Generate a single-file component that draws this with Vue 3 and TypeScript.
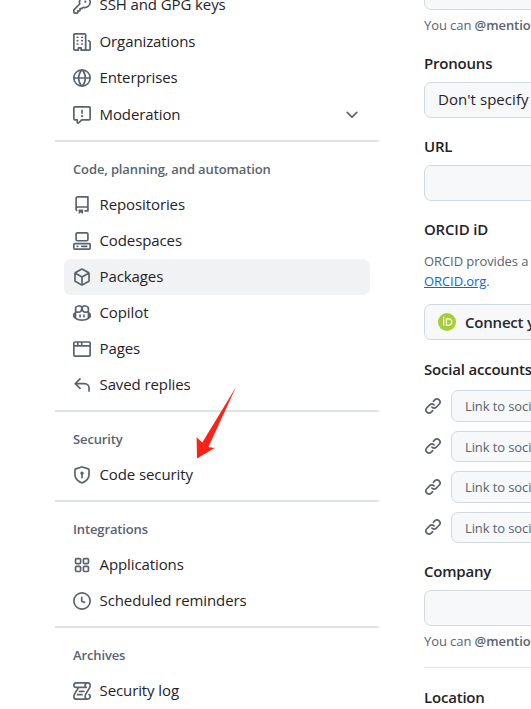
<script setup lang="ts">
interface NavItem {
  label: string
  icon: string
  active?: boolean
  expandable?: boolean
}
interface NavGroup {
  title?: string
  items: NavItem[]
}

const icons: Record<string, string> = {
  key: 'M10.5 0a5.499 5.499 0 1 1-1.288 10.848l-.932.932a.749.749 0 0 1-.53.22H7v.75a.749.749 0 0 1-.22.53l-.5.5a.749.749 0 0 1-.53.22H5v.75a.749.749 0 0 1-.22.53l-.5.5a.749.749 0 0 1-.53.22h-2A1.75 1.75 0 0 1 0 14.25v-2c0-.199.079-.389.22-.53l4.932-4.932A5.5 5.5 0 0 1 10.5 0Zm-4 5.5c-.001.431.069.86.205 1.269a.75.75 0 0 1-.181.768L1.5 12.56v1.69c0 .138.112.25.25.25h1.69l.06-.06v-1.19a.75.75 0 0 1 .75-.75h1.19l.06-.06v-1.19a.75.75 0 0 1 .75-.75h1.19l1.023-1.025a.75.75 0 0 1 .768-.18A4 4 0 1 0 6.5 5.5ZM11 6a1 1 0 1 1 0-2 1 1 0 0 1 0 2Z',
  organization: 'M1.75 16A1.75 1.75 0 0 1 0 14.25V1.75C0 .784.784 0 1.75 0h8.5C11.216 0 12 .784 12 1.75v12.5c0 .085-.006.168-.018.25h2.268a.25.25 0 0 0 .25-.25V8.285a.25.25 0 0 0-.111-.208l-1.055-.703a.749.749 0 1 1 .832-1.248l1.055.703c.487.325.779.871.779 1.456v5.965A1.75 1.75 0 0 1 14.25 16h-3.5a.766.766 0 0 1-.197-.026c-.099.017-.2.026-.303.026h-3a.75.75 0 0 1-.75-.75V14h-1v1.25a.75.75 0 0 1-.75.75Zm-.25-1.75c0 .138.112.25.25.25H4v-1.25a.75.75 0 0 1 .75-.75h2.5a.75.75 0 0 1 .75.75v1.25h2.25a.25.25 0 0 0 .25-.25V1.75a.25.25 0 0 0-.25-.25h-8.5a.25.25 0 0 0-.25.25ZM3.75 6h.5a.75.75 0 0 1 0 1.5h-.5a.75.75 0 0 1 0-1.5ZM3 3.75A.75.75 0 0 1 3.75 3h.5a.75.75 0 0 1 0 1.5h-.5A.75.75 0 0 1 3 3.75Zm4 3A.75.75 0 0 1 7.75 6h.5a.75.75 0 0 1 0 1.5h-.5A.75.75 0 0 1 7 6.75ZM7.75 3h.5a.75.75 0 0 1 0 1.5h-.5a.75.75 0 0 1 0-1.5ZM3 9.75A.75.75 0 0 1 3.75 9h.5a.75.75 0 0 1 0 1.5h-.5A.75.75 0 0 1 3 9.75ZM7.75 9h.5a.75.75 0 0 1 0 1.5h-.5a.75.75 0 0 1 0-1.5Z',
  globe: 'M8 0a8 8 0 1 1 0 16A8 8 0 0 1 8 0ZM5.78 8.75a9.64 9.64 0 0 0 1.363 4.177c.255.426.542.832.857 1.215.245-.296.551-.705.857-1.215A9.64 9.64 0 0 0 10.22 8.75Zm4.44-1.5a9.64 9.64 0 0 0-1.363-4.177c-.307-.51-.612-.919-.857-1.215a9.927 9.927 0 0 0-.857 1.215A9.64 9.64 0 0 0 5.78 7.25Zm-5.944 1.5H1.543a6.507 6.507 0 0 0 4.666 5.5c-.123-.181-.24-.365-.352-.552-.715-1.192-1.437-2.874-1.581-4.948Zm-2.733-1.5h2.733c.144-2.074.866-3.756 1.58-4.948.12-.197.237-.381.353-.552a6.507 6.507 0 0 0-4.666 5.5Zm10.181 1.5c-.144 2.074-.866 3.756-1.58 4.948-.12.197-.237.381-.353.552a6.507 6.507 0 0 0 4.666-5.5Zm2.733-1.5a6.507 6.507 0 0 0-4.666-5.5c.123.181.24.365.353.552.714 1.192 1.436 2.874 1.58 4.948Z',
  report: 'M0 1.75C0 .784.784 0 1.75 0h12.5C15.216 0 16 .784 16 1.75v9.5A1.75 1.75 0 0 1 14.25 13H8.06l-2.573 2.573A1.458 1.458 0 0 1 3 14.543V13H1.75A1.75 1.75 0 0 1 0 11.25Zm1.75-.25a.25.25 0 0 0-.25.25v9.5c0 .138.112.25.25.25h2a.75.75 0 0 1 .75.75v2.19l2.72-2.72a.749.749 0 0 1 .53-.22h6.5a.25.25 0 0 0 .25-.25v-9.5a.25.25 0 0 0-.25-.25Zm7 2.25v2.5a.75.75 0 0 1-1.5 0v-2.5a.75.75 0 0 1 1.5 0ZM9 9a1 1 0 1 1-2 0 1 1 0 0 1 2 0Z',
  chevron: 'M12.78 5.22a.749.749 0 0 1 0 1.06l-4.25 4.25a.749.749 0 0 1-1.06 0L3.22 6.28a.749.749 0 1 1 1.06-1.06L8 8.939l3.72-3.719a.749.749 0 0 1 1.06 0Z',
  repo: 'M2 2.5A2.5 2.5 0 0 1 4.5 0h8.75a.75.75 0 0 1 .75.75v12.5a.75.75 0 0 1-.75.75h-2.5a.75.75 0 0 1 0-1.5h1.75v-2h-8a1 1 0 0 0-.714 1.7.75.75 0 1 1-1.072 1.05A2.495 2.495 0 0 1 2 11.5Zm10.5-1h-8a1 1 0 0 0-1 1v6.708A2.486 2.486 0 0 1 4.5 9h8ZM5 12.25a.25.25 0 0 1 .25-.25h3.5a.25.25 0 0 1 .25.25v3.25a.25.25 0 0 1-.4.2l-1.45-1.087a.249.249 0 0 0-.3 0L5.4 15.7a.25.25 0 0 1-.4-.2Z',
  codespaces: 'M0 11.25c0-.966.784-1.75 1.75-1.75h12.5c.966 0 1.75.784 1.75 1.75v3A1.75 1.75 0 0 1 14.25 16H1.75A1.75 1.75 0 0 1 0 14.25Zm2-9.5C2 .784 2.784 0 3.75 0h8.5C13.216 0 14 .784 14 1.75v5a1.75 1.75 0 0 1-1.75 1.75h-8.5A1.75 1.75 0 0 1 2 6.75Zm1.75-.25a.25.25 0 0 0-.25.25v5c0 .138.112.25.25.25h8.5a.25.25 0 0 0 .25-.25v-5a.25.25 0 0 0-.25-.25Zm-2 9.5a.25.25 0 0 0-.25.25v3c0 .138.112.25.25.25h12.5a.25.25 0 0 0 .25-.25v-3a.25.25 0 0 0-.25-.25ZM7 12.75a.75.75 0 0 1 .75-.75h4.5a.75.75 0 0 1 0 1.5h-4.5a.75.75 0 0 1-.75-.75Zm-4 0a.75.75 0 0 1 .75-.75h.5a.75.75 0 0 1 0 1.5h-.5a.75.75 0 0 1-.75-.75Z',
  package: 'm8.878.392 5.25 3.045c.54.314.872.89.872 1.514v6.098a1.75 1.75 0 0 1-.872 1.514l-5.25 3.045a1.75 1.75 0 0 1-1.756 0l-5.25-3.045A1.75 1.75 0 0 1 1 11.049V4.951c0-.624.332-1.201.872-1.514L7.122.392a1.75 1.75 0 0 1 1.756 0ZM7.875 1.69l-4.63 2.685L8 7.133l4.755-2.758-4.63-2.685a.248.248 0 0 0-.25 0ZM2.5 5.677v5.372c0 .09.047.171.125.216l4.625 2.683V8.432Zm6.25 8.271 4.625-2.683a.25.25 0 0 0 .125-.216V5.677L8.75 8.432Z',
  copilot: 'M7.998 15.035c-4.562 0-7.873-2.914-7.998-3.749V9.338c.085-.628.677-1.686 1.588-2.065.013-.07.024-.143.036-.218.029-.183.06-.384.126-.612-.201-.508-.254-1.084-.254-1.656 0-.87.128-1.769.693-2.484.579-.733 1.494-1.124 2.724-1.261 1.206-.134 2.262.034 2.944.765.05.053.096.108.139.165.044-.057.094-.112.143-.165.682-.731 1.738-.899 2.944-.765 1.23.137 2.145.528 2.724 1.261.566.715.693 1.614.693 2.484 0 .572-.053 1.148-.254 1.656.066.228.098.429.126.612.012.076.024.148.037.218.924.385 1.522 1.471 1.591 2.095v1.872c0 .766-3.351 3.795-8.002 3.795Zm0-1.485c2.28 0 4.584-1.11 5.002-1.433V7.862l-.023-.116c-.49.21-1.075.291-1.727.291-1.146 0-2.059-.327-2.71-.991A3.222 3.222 0 0 1 8 6.303a3.24 3.24 0 0 1-.544.743c-.65.664-1.563.991-2.71.991-.652 0-1.236-.081-1.727-.291l-.023.116v4.255c.419.323 2.722 1.433 5.002 1.433ZM6.762 2.83c-.193-.206-.637-.413-1.682-.297-1.019.113-1.479.404-1.713.7-.247.312-.369.789-.369 1.554 0 .793.129 1.171.308 1.371.162.181.519.379 1.442.379.853 0 1.339-.235 1.638-.54.315-.322.527-.827.617-1.553.117-.935-.037-1.395-.241-1.614Zm4.155-.297c-1.044-.116-1.488.091-1.681.297-.204.219-.359.679-.242 1.614.091.726.303 1.231.618 1.553.299.305.784.54 1.638.54.922 0 1.28-.198 1.442-.379.179-.2.308-.578.308-1.371 0-.765-.123-1.242-.37-1.554-.233-.296-.693-.587-1.713-.7ZM6.25 9.037a.75.75 0 0 1 .75.75v1.501a.75.75 0 0 1-1.5 0V9.787a.75.75 0 0 1 .75-.75Zm4.25.75v1.501a.75.75 0 0 1-1.5 0V9.787a.75.75 0 0 1 1.5 0Z',
  browser: 'M0 2.75C0 1.784.784 1 1.75 1h12.5c.966 0 1.75.784 1.75 1.75v10.5A1.75 1.75 0 0 1 14.25 15H1.75A1.75 1.75 0 0 1 0 13.25ZM14.5 6h-13v7.25c0 .138.112.25.25.25h12.5a.25.25 0 0 0 .25-.25Zm-6-3.5v2h6V2.75a.25.25 0 0 0-.25-.25ZM5 2.5v2h2v-2Zm-3.25 0a.25.25 0 0 0-.25.25V4.5h2v-2Z',
  reply: 'M6.78 1.97a.75.75 0 0 1 0 1.06L3.81 6h6.44A4.75 4.75 0 0 1 15 10.75v2.5a.75.75 0 0 1-1.5 0v-2.5a3.25 3.25 0 0 0-3.25-3.25H3.81l2.97 2.97a.749.749 0 0 1-.326 1.275.749.749 0 0 1-.734-.215L1.47 7.28a.75.75 0 0 1 0-1.06l4.25-4.25a.75.75 0 0 1 1.06 0Z',
  shield: 'm8.533.133 5.25 1.68A1.75 1.75 0 0 1 15 3.48V7c0 1.566-.32 3.182-1.303 4.682-.983 1.498-2.585 2.813-5.032 3.855a1.697 1.697 0 0 1-1.33 0c-2.447-1.042-4.049-2.357-5.032-3.855C1.32 10.182 1 8.566 1 7V3.48a1.75 1.75 0 0 1 1.217-1.667l5.25-1.68a1.748 1.748 0 0 1 1.066 0Zm-.61 1.429.001.001-5.25 1.68a.251.251 0 0 0-.174.237V7c0 1.36.275 2.666 1.057 3.859.784 1.194 2.121 2.342 4.366 3.298a.196.196 0 0 0 .154 0c2.245-.957 3.582-2.103 4.366-3.297C13.225 9.666 13.5 8.358 13.5 7V3.48a.25.25 0 0 0-.174-.238l-5.25-1.68a.25.25 0 0 0-.153 0ZM9.5 6.5c0 .536-.286 1.032-.75 1.3v2.45a.75.75 0 0 1-1.5 0V7.8A1.5 1.5 0 1 1 9.5 6.5Z',
  apps: 'M1.5 3.25c0-.966.784-1.75 1.75-1.75h2.5c.966 0 1.75.784 1.75 1.75v2.5A1.75 1.75 0 0 1 5.75 7.5h-2.5A1.75 1.75 0 0 1 1.5 5.75Zm7 0c0-.966.784-1.75 1.75-1.75h2.5c.966 0 1.75.784 1.75 1.75v2.5a1.75 1.75 0 0 1-1.75 1.75h-2.5A1.75 1.75 0 0 1 8.5 5.75Zm-7 7c0-.966.784-1.75 1.75-1.75h2.5c.966 0 1.75.784 1.75 1.75v2.5a1.75 1.75 0 0 1-1.75 1.75h-2.5a1.75 1.75 0 0 1-1.75-1.75Zm7 0c0-.966.784-1.75 1.75-1.75h2.5c.966 0 1.75.784 1.75 1.75v2.5a1.75 1.75 0 0 1-1.75 1.75h-2.5a1.75 1.75 0 0 1-1.75-1.75ZM3.25 3a.25.25 0 0 0-.25.25v2.5c0 .138.112.25.25.25h2.5A.25.25 0 0 0 6 5.75v-2.5A.25.25 0 0 0 5.75 3Zm7 0a.25.25 0 0 0-.25.25v2.5c0 .138.112.25.25.25h2.5a.25.25 0 0 0 .25-.25v-2.5a.25.25 0 0 0-.25-.25Zm-7 7a.25.25 0 0 0-.25.25v2.5c0 .138.112.25.25.25h2.5a.25.25 0 0 0 .25-.25v-2.5a.25.25 0 0 0-.25-.25Zm7 0a.25.25 0 0 0-.25.25v2.5c0 .138.112.25.25.25h2.5a.25.25 0 0 0 .25-.25v-2.5a.25.25 0 0 0-.25-.25Z',
  clock: 'M8 0a8 8 0 1 1 0 16A8 8 0 0 1 8 0ZM1.5 8a6.5 6.5 0 1 0 13 0 6.5 6.5 0 0 0-13 0Zm7-3.25v2.992l2.028.812a.75.75 0 0 1-.557 1.392l-2.5-1A.751.751 0 0 1 7 8.25v-3.5a.75.75 0 0 1 1.5 0Z',
  log: 'M5 8.25a.75.75 0 0 1 .75-.75h4a.75.75 0 0 1 0 1.5h-4A.75.75 0 0 1 5 8.25ZM4 10.5A.75.75 0 0 0 4 12h4a.75.75 0 0 0 0-1.5H4ZM13-.005c1.654 0 3 1.328 3 3 0 .982-.338 1.933-.783 2.818-.443.879-1.028 1.758-1.582 2.588l-.011.017c-.568.853-1.104 1.659-1.501 2.446-.398.789-.623 1.494-.623 2.136a1.5 1.5 0 1 0 2.333-1.248.75.75 0 0 1 .834-1.246A3 3 0 0 1 13 16H3a3 3 0 0 1-3-3c0-1.582.891-3.135 1.777-4.506.209-.322.418-.637.623-.946.473-.709.923-1.386 1.287-2.048H2.51c-.576 0-1.381-.133-1.907-.783A2.68 2.68 0 0 1 0 2.995a3 3 0 0 1 3-3Zm0 1.5a1.5 1.5 0 0 0-1.5 1.5c0 .476.223.834.667 1.132A.75.75 0 0 1 11.75 5.5H5.368c-.467 1.003-1.141 2.015-1.773 2.963-.192.289-.381.571-.558.845C2.13 10.711 1.5 11.916 1.5 13A1.5 1.5 0 0 0 3 14.5h7.401A2.989 2.989 0 0 1 10 13c0-.979.338-1.928.784-2.812.441-.874 1.023-1.748 1.575-2.576l.017-.026c.568-.853 1.103-1.658 1.501-2.448.398-.79.623-1.497.623-2.143 0-.838-.669-1.5-1.5-1.5Zm-10 0a1.5 1.5 0 0 0-1.5 1.5c0 .321.1.569.27.778.097.12.325.227.74.227h7.674A2.737 2.737 0 0 1 10 2.995c0-.546.146-1.059.401-1.5Z',
  link: 'm7.775 3.275 1.25-1.25a3.5 3.5 0 1 1 4.95 4.95l-2.5 2.5a3.5 3.5 0 0 1-4.95 0 .751.751 0 0 1 .018-1.042.751.751 0 0 1 1.042-.018 1.998 1.998 0 0 0 2.83 0l2.5-2.5a2.002 2.002 0 0 0-2.83-2.83l-1.25 1.25a.751.751 0 0 1-1.042-.018.751.751 0 0 1-.018-1.042Zm-4.69 9.64a1.998 1.998 0 0 0 2.83 0l1.25-1.25a.751.751 0 0 1 1.042.018.751.751 0 0 1 .018 1.042l-1.25 1.25a3.5 3.5 0 1 1-4.95-4.95l2.5-2.5a3.5 3.5 0 0 1 4.95 0 .751.751 0 0 1-.018 1.042.751.751 0 0 1-1.042.018 1.998 1.998 0 0 0-2.83 0l-2.5 2.5a1.998 1.998 0 0 0 0 2.83Z',
}

const groups: NavGroup[] = [
  {
    items: [
      { label: 'SSH and GPG keys', icon: 'key' },
      { label: 'Organizations', icon: 'organization' },
      { label: 'Enterprises', icon: 'globe' },
      { label: 'Moderation', icon: 'report', expandable: true },
    ],
  },
  {
    title: 'Code, planning, and automation',
    items: [
      { label: 'Repositories', icon: 'repo' },
      { label: 'Codespaces', icon: 'codespaces' },
      { label: 'Packages', icon: 'package', active: true },
      { label: 'Copilot', icon: 'copilot' },
      { label: 'Pages', icon: 'browser' },
      { label: 'Saved replies', icon: 'reply' },
    ],
  },
  { title: 'Security', items: [{ label: 'Code security', icon: 'shield' }] },
  {
    title: 'Integrations',
    items: [
      { label: 'Applications', icon: 'apps' },
      { label: 'Scheduled reminders', icon: 'clock' },
    ],
  },
  { title: 'Archives', items: [{ label: 'Security log', icon: 'log' }] },
]

const socialLinks = [1, 2, 3, 4]
</script>

<template>
  <div class="page">
    <nav class="sidebar">
      <section v-for="(group, i) in groups" :key="i" class="group" :class="{ first: i === 0 }">
        <h3 v-if="group.title" class="group-title">{{ group.title }}</h3>
        <a v-for="item in group.items" :key="item.label" class="item" :class="{ active: item.active }">
          <svg class="icon" viewBox="0 0 16 16"><path :d="icons[item.icon]" /></svg>
          <span class="item-label">{{ item.label }}</span>
          <svg v-if="item.expandable" class="icon" viewBox="0 0 16 16"><path :d="icons.chevron" /></svg>
        </a>
      </section>
    </nav>

    <main class="form">
      <div class="field cut"></div>
      <p class="help">You can <b>@mention</b></p>

      <label class="label pronouns">Pronouns</label>
      <div class="field">Don't specify</div>

      <label class="label">URL</label>
      <div class="field"></div>

      <label class="label">ORCID iD</label>
      <p class="orcid-text">ORCID provides a</p>
      <p class="orcid-text second"><a class="link">ORCID.org</a>.</p>
      <button class="connect">
        <svg class="orcid" viewBox="0 0 18 18">
          <circle cx="9" cy="9" r="9" fill="#a6ce39" />
          <path d="M5.7 5.7v7.1M8.4 5.8v6.4h2.2a3.2 3.2 0 0 0 0-6.4Z" fill="none" stroke="#fff" stroke-width="1.15" />
          <circle cx="5.7" cy="4.2" r=".75" fill="#fff" />
        </svg>
        <span>Connect your</span>
      </button>

      <label class="label social-label">Social accounts</label>
      <div class="socials">
        <div v-for="n in socialLinks" :key="n" class="social">
          <svg class="icon" viewBox="0 0 16 16"><path :d="icons.link" /></svg>
          <div class="social-input">Link to social</div>
        </div>
      </div>

      <label class="label">Company</label>
      <div class="field"></div>
      <p class="help">You can <b>@mention</b></p>
      <div class="rule"></div>
      <label class="label location">Location</label>
    </main>

    <svg class="arrow" viewBox="0 0 43 74">
      <path d="M42 0 8.3 55.6 2.6 50.2 3 71.4l17.6-10.5-6.2-.8Z" />
    </svg>
  </div>
</template>

<style>
html, body { background: #fff; overflow: hidden; }
</style>

<style scoped>
.page {
  position: relative;
  display: grid;
  grid-template-columns: 324px 480px;
  column-gap: 45px;
  padding-left: 55px;
  box-sizing: border-box;
  width: 531px;
  height: 709px;
  overflow: hidden;
  font-family: "Open Sans", "Noto Sans", sans-serif;
  font-size: 15px;
  letter-spacing: -0.2px;
  color: #1f2328;
  white-space: nowrap;
}
.sidebar { margin-top: -13px; }
.group { padding-bottom: 7px; }
.group + .group { border-top: 2px solid #dee3e8; }
.group-title {
  margin: 0;
  height: 45px;
  padding: 16px 18px 0;
  box-sizing: border-box;
  font-size: 13px;
  line-height: 22px;
  font-weight: 600;
  letter-spacing: -0.13px;
  color: #59636e;
}
.item {
  display: flex;
  align-items: center;
  gap: 8.5px;
  height: 36px;
  margin: 0 9px;
  padding: 0 9px;
  border-radius: 7px;
}
.first .item { height: 36.5px; }
.item.active { background: #f1f2f4; }
.item-label { flex: 1; line-height: 22px; padding-bottom: 2px; letter-spacing: -0.1px; }
.icon { width: 18px; height: 18px; flex: none; fill: #59636e; }
.form { display: flex; flex-direction: column; }
.field {
  height: 36px;
  flex: none;
  box-sizing: border-box;
  border: 1px solid #d1d9e0;
  border-radius: 7px;
  background: #f6f8fa;
  padding: 0 13px;
  line-height: 33px;
  letter-spacing: 0.05px;
}
.cut { margin-top: -26px; }
.help {
  margin: 0;
  height: 30px;
  line-height: 30px;
  font-size: 13px;
  letter-spacing: -0.08px;
  color: #59636e;
}
.help b { font-weight: 600; }
.label { margin: 16px 0 7px; line-height: 24px; font-weight: 600; }
.pronouns { margin-top: 11px; }
.orcid-text { margin: 3px 0 0; font-size: 13px; line-height: 20px; letter-spacing: -0.08px; color: #59636e; }
.orcid-text.second { margin: 0 0 13px; }
.link { color: #0969da; text-decoration: underline; }
.connect {
  display: flex;
  align-items: center;
  gap: 9px;
  height: 36px;
  padding: 0 13px;
  border: 1px solid #d1d9e0;
  border-radius: 7px;
  background: #f6f8fa;
  font: inherit;
  font-weight: 600;
  letter-spacing: inherit;
  color: #25292e;
}
.orcid { width: 18px; height: 18px; }
.social-label { margin: 17px 0 9px; }
.socials { display: flex; flex-direction: column; gap: 9px; }
.social { display: flex; align-items: center; gap: 9px; height: 31.5px; }
.social-input {
  flex: 1;
  height: 100%;
  box-sizing: border-box;
  padding: 0 13px;
  border: 1px solid #d1d9e0;
  border-radius: 7px;
  background: #f6f8fa;
  font-size: 13px;
  line-height: 30px;
  letter-spacing: -0.1px;
  color: #59636e;
}
.rule { height: 1px; margin-top: 11px; background: #dee3e8; }
.location { margin: 17px 0 0; }
.arrow {
  position: absolute;
  left: 194px;
  top: 387px;
  width: 43px;
  height: 74px;
  fill: #ff2116;
}
</style>
